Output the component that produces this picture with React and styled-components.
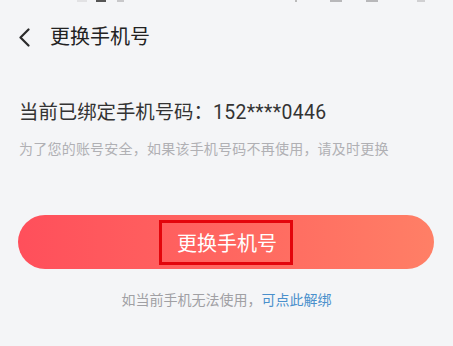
import React from 'react';
import styled, { createGlobalStyle } from 'styled-components';

const GlobalStyle = createGlobalStyle`
  html, body {
    margin: 0;
    padding: 0;
    background: #f4f5f7;
  }
  body {
    font-family: Roboto, "Noto Sans CJK SC", "Noto Sans", sans-serif;
    -webkit-font-smoothing: antialiased;
  }
`;

const Screen = styled.div`
  width: 453px;
  height: 346px;
  background: #f4f5f7;
  overflow: hidden;
`;

/* bottom edge of the phone status bar, cut off by the crop */
const StatusStrip = styled.div`
  position: relative;
  height: 14px;
`;

const StatusMark = styled.span`
  position: absolute;
  top: 0;
  height: 2px;
  background: ${p => p.color};
`;

const Header = styled.div`
  display: flex;
  align-items: center;
  height: 46px;
  padding: 0 18px;
  gap: 20px;
`;

const BackButton = styled.button`
  display: flex;
  align-items: center;
  justify-content: center;
  width: 12px;
  height: 20px;
  padding: 0;
  border: none;
  background: none;
`;

const Title = styled.h1`
  margin: 0;
  font-size: 20px;
  font-weight: 400;
  color: #222;
  line-height: 26px;
`;

const Body = styled.div`
  padding: 40px 19px 0;
`;

const BoundPhone = styled.div`
  font-size: 19.4px;
  line-height: 26px;
  color: #333;
`;

const PhoneNumber = styled.span`
  letter-spacing: 0.35px;
`;

const Hint = styled.div`
  margin-top: 13px;
  font-size: 14px;
  letter-spacing: 0.22px;
  line-height: 20px;
  color: #b0b0b4;
`;

const ChangeButton = styled.button`
  display: flex;
  align-items: center;
  justify-content: center;
  width: 416px;
  height: 54px;
  margin: 56px 0 0 -1px;
  border: none;
  border-radius: 27px;
  background: linear-gradient(90deg, #ff4f5b 0%, #ff6660 50%, #ff7f66 100%);
  font-family: inherit;
  font-size: 20px;
  color: #fff;
  cursor: pointer;
`;

const Highlight = styled.span`
  display: flex;
  align-items: center;
  justify-content: center;
  width: 134px;
  height: 45px;
  box-sizing: border-box;
  border: 3px solid #e3050c;
  padding-left: 2px;
`;

const Footer = styled.div`
  margin-top: 21px;
  text-align: center;
  font-size: 14px;
  line-height: 20px;
  color: #a0a0a4;
`;

const Link = styled.a`
  color: #4a90cc;
  text-decoration: none;
  cursor: pointer;
`;

const marks = [
  { left: 77, width: 10, color: '#e2e2e4' },
  { left: 96, width: 10, color: '#555' },
  { left: 117, width: 7, color: '#c8c8ca' },
  { left: 295, width: 2, color: '#bbb' },
  { left: 330, width: 12, color: '#b8b8ba' },
  { left: 366, width: 12, color: '#b8b8ba' },
  { left: 417, width: 8, color: '#d0d0d2' },
];

export default function App() {
  return (
    <>
      <GlobalStyle />
      <Screen>
        <StatusStrip>
          {marks.map(m => (
            <StatusMark key={m.left} color={m.color} style={{ left: m.left, width: m.width }} />
          ))}
        </StatusStrip>
        <Header>
          <BackButton aria-label="返回">
            <svg width="12" height="19" viewBox="0 0 12 19">
              <path d="M10.5 1.5 L2.5 9.5 L10.5 17.5" fill="none" stroke="#2a2a2a" strokeWidth="2.2" strokeLinecap="round" strokeLinejoin="round" />
            </svg>
          </BackButton>
          <Title>更换手机号</Title>
        </Header>
        <Body>
          <BoundPhone>
            当前已绑定手机号码：<PhoneNumber>152****0446</PhoneNumber>
          </BoundPhone>
          <Hint>为了您的账号安全，如果该手机号码不再使用，请及时更换</Hint>
          <ChangeButton>
            <Highlight>更换手机号</Highlight>
          </ChangeButton>
          <Footer>
            如当前手机无法使用，<Link>可点此解绑</Link>
          </Footer>
        </Body>
      </Screen>
    </>
  );
}
